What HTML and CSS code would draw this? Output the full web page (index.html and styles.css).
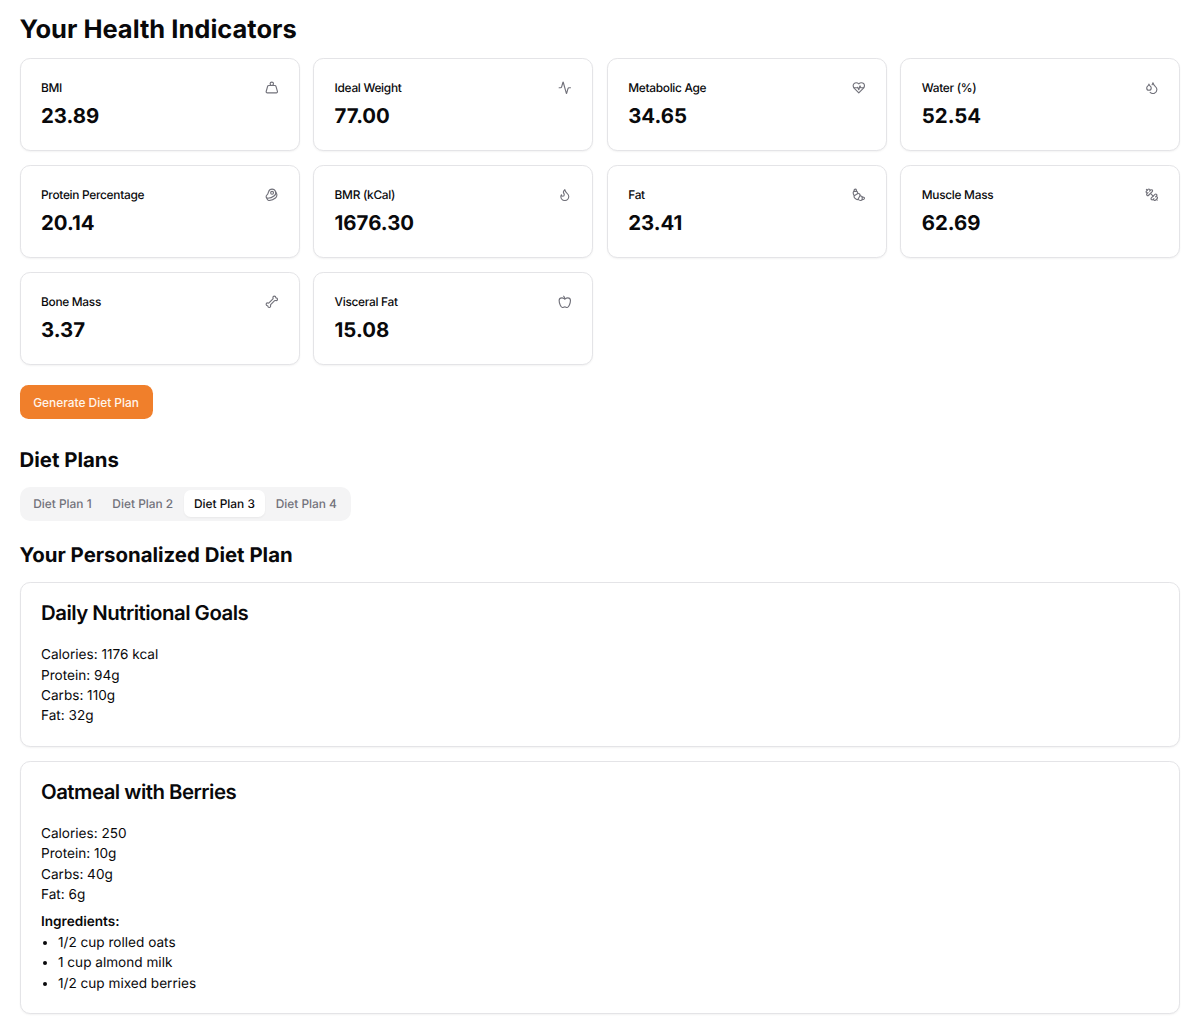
FILE: index.html
```html
<!DOCTYPE html>
<html lang="en">
<head>
<meta charset="utf-8">
<title>Your Health Indicators</title>
<link rel="stylesheet" href="styles.css">
</head>
<body>
<main class="page">
  <h1 class="title">Your Health Indicators</h1>
  <section class="grid">
    <article class="card stat"><div class="stat-head"><span class="label">BMI</span><svg class="icon" viewBox="0 0 24 24"><circle cx="12" cy="5" r="3"/><path d="M6.5 8a2 2 0 0 0-1.905 1.46L2.1 18.5A2 2 0 0 0 4 21h16a2 2 0 0 0 1.925-2.54L19.4 9.5A2 2 0 0 0 17.48 8Z"/></svg></div><div class="value">23.89</div></article>
    <article class="card stat"><div class="stat-head"><span class="label">Ideal Weight</span><svg class="icon" viewBox="0 0 24 24"><path d="M22 12h-2.48a2 2 0 0 0-1.93 1.46l-2.35 8.36a.25.25 0 0 1-.48 0L9.24 2.18a.25.25 0 0 0-.48 0l-2.35 8.36A2 2 0 0 1 4.49 12H2"/></svg></div><div class="value">77.00</div></article>
    <article class="card stat"><div class="stat-head"><span class="label">Metabolic Age</span><svg class="icon" viewBox="0 0 24 24"><path d="M19 14c1.49-1.46 3-3.21 3-5.5A5.5 5.5 0 0 0 16.5 3c-1.76 0-3 .5-4.5 2-1.5-1.5-2.74-2-4.5-2A5.5 5.5 0 0 0 2 8.5c0 2.3 1.5 4.05 3 5.5l7 7Z"/><path d="M3.22 12H9.5l.5-1 2 4.5 2-7 1.5 3.5h5.27"/></svg></div><div class="value">34.65</div></article>
    <article class="card stat"><div class="stat-head"><span class="label">Water (%)</span><svg class="icon" viewBox="0 0 24 24"><path d="M7 16.3c2.2 0 4-1.83 4-4.05 0-1.16-.57-2.26-1.71-3.19S7.29 6.75 7 5.3c-.29 1.45-1.14 2.84-2.29 3.76S3 11.1 3 12.25c0 2.22 1.8 4.05 4 4.05z"/><path d="M12.56 6.6A10.97 10.97 0 0 0 14 3.02c.5 2.5 2 4.9 4 6.5s3 3.5 3 5.5a6.98 6.98 0 0 1-11.91 4.97"/></svg></div><div class="value">52.54</div></article>
    <article class="card stat"><div class="stat-head"><span class="label">Protein Percentage</span><svg class="icon" viewBox="0 0 24 24"><circle cx="12.5" cy="8.5" r="2.5"/><path d="M12.5 2a6.5 6.5 0 0 0-6.22 4.6c-1.1 3.13-.78 3.9-3.18 6.08A3 3 0 0 0 5 18c4 0 8.4-1.8 11.4-4.3A6.5 6.5 0 0 0 12.5 2Z"/><path d="m18.5 6 2.19 4.5a6.48 6.48 0 0 1 .31 2 6.49 6.49 0 0 1-2.6 5.2C15.4 20.2 11 22 7 22a3 3 0 0 1-2.68-1.66L2.4 16.5"/></svg></div><div class="value">20.14</div></article>
    <article class="card stat"><div class="stat-head"><span class="label">BMR (kCal)</span><svg class="icon" viewBox="0 0 24 24"><path d="M8.5 14.5A2.5 2.5 0 0 0 11 12c0-1.38-.5-2-1-3-1.072-2.143-.224-4.054 2-6 .5 2.5 2 4.9 4 6.5 2 1.6 3 3.5 3 5.5a7 7 0 1 1-14 0c0-1.153.433-2.294 1-3a2.5 2.5 0 0 0 2.5 2.5z"/></svg></div><div class="value">1676.30</div></article>
    <article class="card stat"><div class="stat-head"><span class="label">Fat</span><svg class="icon" viewBox="0 0 24 24"><path d="m4.6 13.11 5.79-3.21c1.89-1.05 4.79 1.78 3.71 3.71l-3.22 5.81C8.8 23.16.79 15.23 4.6 13.11Z"/><path d="m10.5 9.5-1-2.29C9.2 6.48 8.8 6 8 6H4.5C2.79 6 2 6.5 2 8.5a7.71 7.71 0 0 0 2 4.83"/><path d="M8 6c0-1.55.24-4-2-4-2 0-2.5 2.17-2.5 4"/><path d="m14.5 13.5 2.29 1c.73.3 1.21.7 1.21 1.5v3.5c0 1.71-.5 2.5-2.5 2.5a7.71 7.71 0 0 1-4.83-2"/><path d="M18 16c1.55 0 4-.24 4 2 0 2-2.17 2.5-4 2.5"/></svg></div><div class="value">23.41</div></article>
    <article class="card stat"><div class="stat-head"><span class="label">Muscle Mass</span><svg class="icon" viewBox="0 0 24 24"><path d="M14.4 14.4 9.6 9.6"/><path d="M18.657 21.485a2 2 0 1 1-2.829-2.828l-1.767 1.768a2 2 0 1 1-2.829-2.829l6.364-6.364a2 2 0 1 1 2.829 2.829l-1.768 1.767a2 2 0 1 1 2.828 2.829z"/><path d="m21.5 21.5-1.4-1.4"/><path d="M3.9 3.9 2.5 2.5"/><path d="M6.404 12.768a2 2 0 1 1-2.829-2.829l1.768-1.767a2 2 0 1 1-2.828-2.829l2.828-2.828a2 2 0 1 1 2.829 2.828l1.767-1.768a2 2 0 1 1 2.829 2.829z"/></svg></div><div class="value">62.69</div></article>
    <article class="card stat"><div class="stat-head"><span class="label">Bone Mass</span><svg class="icon" viewBox="0 0 24 24"><path d="M17 10c.7-.7 1.69 0 2.5 0a2.5 2.5 0 1 0 0-5 .5.5 0 0 1-.5-.5 2.5 2.5 0 1 0-5 0c0 .81.7 1.8 0 2.5l-7 7c-.7.7-1.69 0-2.5 0a2.5 2.5 0 0 0 0 5c.28 0 .5.22.5.5a2.5 2.5 0 1 0 5 0c0-.81-.7-1.8 0-2.5Z"/></svg></div><div class="value">3.37</div></article>
    <article class="card stat"><div class="stat-head"><span class="label">Visceral Fat</span><svg class="icon" viewBox="0 0 24 24"><path d="M12 20.94c1.5 0 2.75 1.06 4 1.06 3 0 6-8 6-12.22A4.91 4.91 0 0 0 17 5c-2.22 0-4 1.44-5 2-1-.56-2.78-2-5-2a4.9 4.9 0 0 0-5 4.78C2 14 5 22 8 22c1.25 0 2.5-1.06 4-1.06Z"/><path d="M10 2c1 .5 2 2 2 5"/></svg></div><div class="value">15.08</div></article>
  </section>
  <button class="generate" type="button">Generate Diet Plan</button>
  <h2 class="section-title plans-title">Diet Plans</h2>
  <div class="tabs">
    <span class="tab">Diet Plan 1</span>
    <span class="tab">Diet Plan 2</span>
    <span class="tab active">Diet Plan 3</span>
    <span class="tab">Diet Plan 4</span>
  </div>
  <h2 class="section-title plan-title">Your Personalized Diet Plan</h2>
  <div class="plan-cards">
    <article class="card plan">
      <h3 class="plan-name">Daily Nutritional Goals</h3>
      <div class="plan-body">
        <p>Calories: 1176 kcal</p>
        <p>Protein: 94g</p>
        <p>Carbs: 110g</p>
        <p>Fat: 32g</p>
      </div>
    </article>
    <article class="card plan">
      <h3 class="plan-name">Oatmeal with Berries</h3>
      <div class="plan-body">
        <p>Calories: 250</p>
        <p>Protein: 10g</p>
        <p>Carbs: 40g</p>
        <p>Fat: 6g</p>
        <h4 class="ingredients">Ingredients:</h4>
        <ul class="list">
          <li>1/2 cup rolled oats</li>
          <li>1 cup almond milk</li>
          <li>1/2 cup mixed berries</li>
        </ul>
      </div>
    </article>
  </div>
</main>
</body>
</html>
```
FILE: styles.css
```css
html {
  font-size: 13.6px;
  text-rendering: geometricPrecision;
}
* {
  box-sizing: border-box;
}
body {
  margin: 0;
  background: #fff;
  color: #09090b;
  font-family: Inter, "Liberation Sans", sans-serif;
  font-size: 1rem;
  line-height: 1.5rem;
}
h1, h2, h3, h4, p, ul {
  margin: 0;
}
.page {
  padding: 15.4px 19.6px 8px;
}
.title {
  font-size: 1.875rem;
  line-height: 2.25rem;
  font-weight: 700;
  margin-bottom: 11.6px;
}
.grid {
  display: grid;
  grid-template-columns: repeat(4, 1fr);
  gap: 1rem;
}
.card {
  background: #fff;
  border: 1px solid #e4e4e7;
  border-radius: 0.75rem;
  box-shadow: 0 1px 2px rgba(0, 0, 0, 0.05);
}
.stat {
  padding: 1.5rem;
}
.stat-head {
  display: flex;
  align-items: center;
  justify-content: space-between;
  margin-bottom: 6.4px;
}
.label {
  font-size: 0.875rem;
  line-height: 1.25rem;
  font-weight: 500;
  letter-spacing: -0.025em;
}
.icon {
  width: 1rem;
  height: 1rem;
  fill: none;
  stroke: #71717a;
  stroke-width: 2;
  stroke-linecap: round;
  stroke-linejoin: round;
}
.value {
  font-size: 1.5rem;
  line-height: 2rem;
  font-weight: 700;
}
.generate {
  display: block;
  height: 2.5rem;
  margin-top: 20px;
  padding: 1px 1rem 0;
  border: 0;
  border-radius: 0.625rem;
  background: #f07f2b;
  color: #fff5ec;
  font: 500 0.875rem/1.25rem Inter, "Liberation Sans", sans-serif;
}
.section-title {
  font-size: 1.5rem;
  line-height: 2rem;
  font-weight: 700;
}
.plans-title {
  margin-top: 2rem;
  margin-bottom: 1rem;
}
.tabs {
  display: inline-flex;
  align-items: center;
  gap: 0.4px;
  height: 2.5rem;
  padding: 0.25rem;
  border-radius: 0.75rem;
  background: #f4f4f5;
  vertical-align: top;
}
.tab {
  padding: 0.375rem 0.75rem;
  border-radius: 0.5rem;
  font-size: 0.875rem;
  line-height: 1.25rem;
  font-weight: 500;
  color: #71717a;
}
.tab.active {
  background: #fff;
  color: #09090b;
  box-shadow: 0 1px 2px rgba(0, 0, 0, 0.05);
}
.plan-title {
  margin-top: 1.5rem;
  margin-bottom: 1rem;
}
.plan-cards {
  display: flex;
  flex-direction: column;
  gap: 1rem;
}
.plan {
  padding: 1.5rem 1.5rem 19.4px;
}
.plan-name {
  font-size: 1.5rem;
  line-height: 1;
  font-weight: 600;
  letter-spacing: -0.025em;
  margin-bottom: 21.4px;
}
.ingredients {
  margin-top: 0.5rem;
  font-size: 1rem;
  font-weight: 600;
}
.list {
  padding-left: 1.25rem;
  list-style: disc;
}
```
